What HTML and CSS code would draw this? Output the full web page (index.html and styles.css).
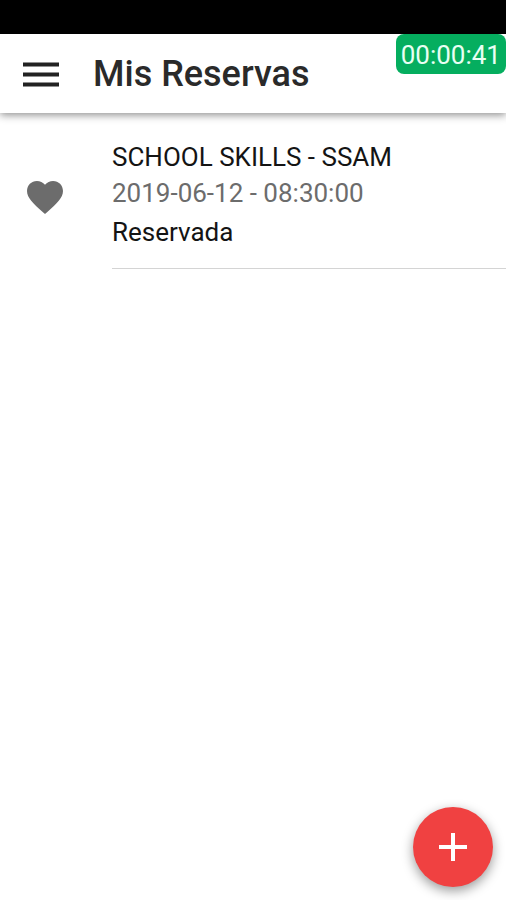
FILE: index.html
```
<!DOCTYPE html>
<html lang="es">
<head>
  <meta charset="UTF-8">
  <meta name="viewport" content="width=device-width, initial-scale=1.0">
  <title>Mis Reservas</title>
  <link rel="stylesheet" href="styles.css">
</head>
<body>

  <div class="status-bar"></div>

  <header class="toolbar">
    <button class="menu-button" type="button" aria-label="Menú">
      <svg viewBox="0 0 36 25" width="36" height="25">
        <path d="M0 .4h36v4.2H0zM0 10.4h36v4.2H0zM0 20.4h36v4.2H0z"/>
      </svg>
    </button>
    <h1>Mis Reservas</h1>
    <span class="timer">00:00:41</span>
  </header>

  <main>
    <ul class="list">
      <li class="item">
        <svg class="heart" viewBox="2 3 20 18.35" width="36" height="33">
          <path d="M12 21.35l-1.45-1.32C5.4 15.36 2 12.28 2 8.5 2 5.42 4.42 3 7.5 3c1.74 0 3.41.81 4.5 2.09C13.09 3.81 14.76 3 16.5 3 19.58 3 22 5.42 22 8.5c0 3.78-3.4 6.86-8.55 11.54z"/>
        </svg>
        <div class="item-text">
          <h2>SCHOOL SKILLS - SSAM</h2>
          <p class="date">2019-06-12 - 08:30:00</p>
          <p class="state">Reservada</p>
        </div>
      </li>
    </ul>
  </main>

  <button class="fab" type="button" aria-label="Nueva reserva">
    <svg viewBox="0 0 28 28" width="28" height="28">
      <path d="M12 0h4v12h12v4H16v12h-4V16H0v-4h12z"/>
    </svg>
  </button>

</body>
</html>
```
FILE: styles.css
```
* {
  box-sizing: border-box;
}
body {
  font-family: Roboto, "Liberation Sans", sans-serif;
  margin: 0;
  min-height: 100vh;
  background-color: #fff;
  color: #141414;
}
h1, h2, p, ul {
  margin: 0;
  padding: 0;
}
button {
  border: none;
  padding: 0;
  cursor: pointer;
}
svg {
  display: block;
}
.status-bar {
  height: 34px;
  background-color: #000;
}
.toolbar {
  position: relative;
  display: flex;
  align-items: center;
  gap: 34px;
  height: 79px;
  padding: 0 23px;
  background-color: #fff;
  box-shadow: 0 2px 8px rgba(0, 0, 0, 0.45);
}
.menu-button {
  padding-top: 2px;
  background: none;
  fill: #222;
}
.toolbar h1 {
  font-size: 36px;
  font-weight: 500;
  line-height: 44px;
  color: #2a2a2a;
}
.timer {
  position: absolute;
  top: 0;
  right: 0;
  padding: 2px 5px 0;
  border-radius: 8px;
  background-color: #05ae5f;
  color: #e8fff3;
  font-size: 26px;
  line-height: 38px;
}
.list {
  list-style: none;
}
.item {
  display: flex;
  align-items: center;
  gap: 49px;
  padding-left: 27px;
}
.heart {
  flex: none;
  margin-top: 12px;
  fill: #6c6c6c;
}
.item-text {
  flex: 1;
  padding: 26px 0 18px;
  border-bottom: 1px solid #d4d4d4;
  font-size: 26px;
  line-height: 36px;
}
.item-text h2 {
  font-size: 26px;
  font-weight: 400;
}
.item-text .date {
  color: #6c6c6c;
}
.item-text .state {
  margin-top: 3px;
}
.fab {
  position: fixed;
  right: 13px;
  bottom: 13px;
  display: flex;
  align-items: center;
  justify-content: center;
  width: 80px;
  height: 80px;
  border-radius: 50%;
  background-color: #f04141;
  fill: #fff;
  box-shadow: 0 4px 12px rgba(0, 0, 0, 0.4);
}
```
